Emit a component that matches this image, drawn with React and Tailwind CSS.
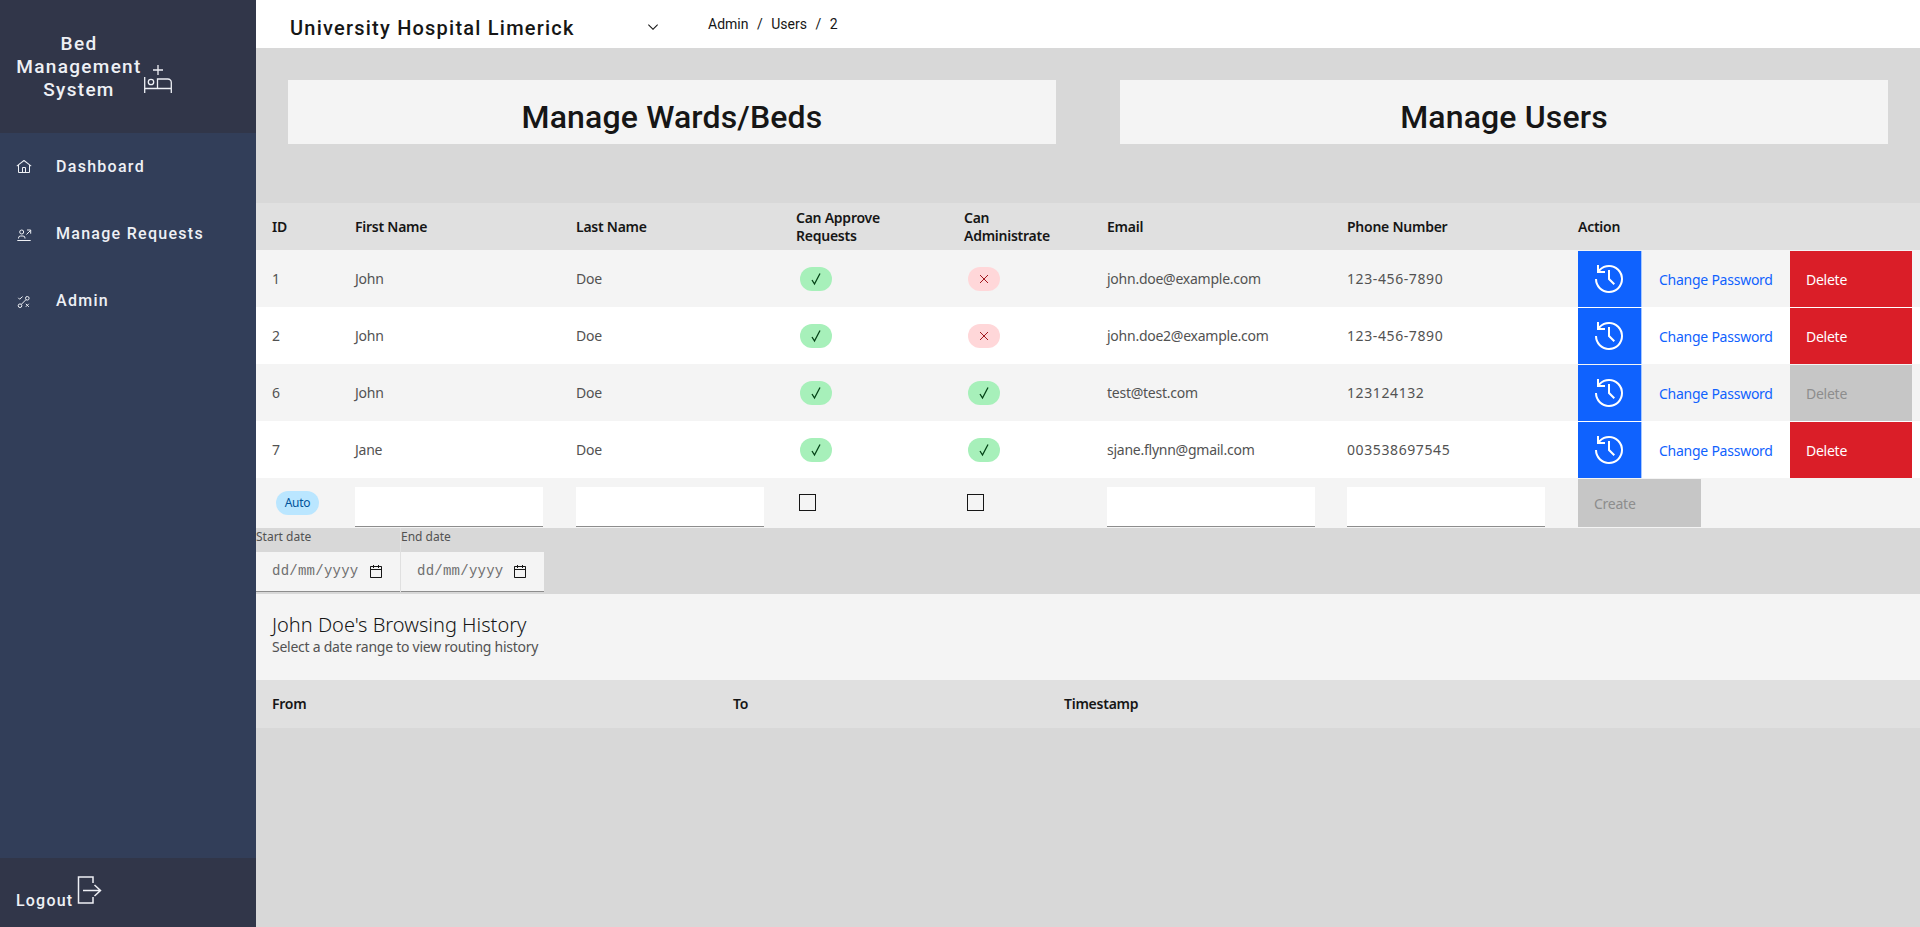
const users = [
  { id: 1, first: 'John', last: 'Doe', approve: true, admin: false, email: 'john.doe@example.com', phone: '123-456-7890' },
  { id: 2, first: 'John', last: 'Doe', approve: true, admin: false, email: 'john.doe2@example.com', phone: '123-456-7890' },
  { id: 6, first: 'John', last: 'Doe', approve: true, admin: true, email: 'test@test.com', phone: '123124132', noDelete: true },
  { id: 7, first: 'Jane', last: 'Doe', approve: true, admin: true, email: 'sjane.flynn@gmail.com', phone: '003538697545' },
]

function HomeIcon(){
  return (
    <svg width="16" height="16" viewBox="0 0 32 32" fill="currentColor">
      <path d="M16.612 2.214a1.01 1.01 0 0 0-1.242 0L1 13.419l1.243 1.572L4 13.621V26a2.004 2.004 0 0 0 2 2h20a2.004 2.004 0 0 0 2-2V13.63L29.757 15 31 13.428zM18 26h-4v-8h4zm2 0v-8a2.002 2.002 0 0 0-2-2h-4a2.002 2.002 0 0 0-2 2v8H6V12.062l10-7.79 10 7.8V26z"/>
    </svg>
  )
}

function RequestsIcon(){
  return (
    <svg width="16" height="16" viewBox="0 0 16 16" fill="none" stroke="currentColor" strokeWidth="1">
      <circle cx="5.700" cy="6" r="2"/>
      <path d="M2.500 12.500v-.5a2 2 0 0 1 2-2h2.500a2 2 0 0 1 2 2v.5"/>
      <path d="M10.500 8.500L14.500 4.500M11 4h3.700v3.700"/>
      <path d="M1.300 14.500h13.400"/>
    </svg>
  )
}

function AdminIcon(){
  return (
    <svg width="16" height="16" viewBox="0 0 16 16" fill="none" stroke="currentColor" strokeWidth="1">
      <path d="M2.300 4.800l1.300 1.400 3-2.600"/>
      <circle cx="11.300" cy="5.300" r="1.800"/>
      <circle cx="4" cy="12.700" r="1.800"/>
      <path d="M5.300 11.400L10 6.600"/>
      <path d="M9.800 10.800l3 3M12.800 10.800l-3 3"/>
    </svg>
  )
}

function BedIcon(){
  return (
    <svg width="30" height="30" viewBox="0 0 30 30" fill="none" stroke="currentColor" strokeWidth="1.300" className="shrink-0">
      <path d="M10 6h10M15 1v10"/>
      <path d="M1.700 13v16M1.700 24.500h26.600M28.300 29V18.500a3.500 3.500 0 0 0-3.500-3.500H14.500v9.500"/>
      <circle cx="8" cy="18" r="2.700"/>
    </svg>
  )
}

function LogoutIcon(){
  return (
    <svg width="25" height="28" viewBox="0 0 25 28" fill="none" stroke="currentColor" strokeWidth="1.500" className="shrink-0">
      <path d="M16 7V1H1.500v26H16v-6"/>
      <path d="M6 14.500h17.500M17.500 9l6 5.500-6 5.500"/>
    </svg>
  )
}

function HistoryIcon(){
  return (
    <svg width="32" height="32" viewBox="0 0 32 32" fill="currentColor">
      <path d="M20.590 22L15 16.410V7h2v8.580l5 5.010L20.590 22z"/>
      <path d="M16 2A13.940 13.940 0 0 0 6 6.230V2H4v8h8V8H7.080A12 12 0 1 1 4 16H2A14 14 0 1 0 16 2z"/>
    </svg>
  )
}

function CalendarIcon(){
  return (
    <svg width="16" height="16" viewBox="0 0 32 32" fill="#161616">
      <path d="M26 4h-4V2h-2v2h-8V2h-2v2H6c-1.100 0-2 .9-2 2v20c0 1.100.9 2 2 2h20c1.100 0 2-.9 2-2V6c0-1.100-.9-2-2-2zm0 22H6V12h20v14zm0-16H6V6h4v2h2V6h8v2h2V6h4v4z"/>
    </svg>
  )
}

function ChevronIcon(){
  return (
    <svg width="16" height="16" viewBox="0 0 32 32" fill="#161616" className="mt-[5px]">
      <path d="M16 22 6 12l1.400-1.400 8.600 8.600 8.600-8.600L26 12z"/>
    </svg>
  )
}

function Tag({ ok }){
  return ok ? (
    <span className="ml-1 flex h-6 w-8 items-center justify-center rounded-full bg-[#a7f0ba] text-[#044317]">
      <svg width="12" height="14" viewBox="0 0 12 14" fill="none" stroke="currentColor" strokeWidth="1.300"><path d="M2 8l2.500 4L10 1.500"/></svg>
    </span>
  ) : (
    <span className="ml-1 flex h-6 w-8 items-center justify-center rounded-full bg-[#ffd7d9] text-[#a2191f]">
      <svg width="12" height="12" viewBox="0 0 12 12" fill="none" stroke="currentColor" strokeWidth="1"><path d="M2 2l8 8M10 2l-8 8"/></svg>
    </span>
  )
}

function NavItem({ icon, label }){
  return (
    <div className="flex h-[67px] items-center px-4 text-[16px] font-medium tracking-[1.28px] text-[#eef0f5]">
      <span className="flex w-10 shrink-0">{icon}</span>
      {label}
    </div>
  )
}

function TextInput(){
  return <input className="block h-10 w-full border-b border-[#8d8d8d] bg-white outline-none"/>
}

function DateField({ label, width }){
  return (
    <div className={width}>
      <div className="h-6 text-[12px] leading-[18px] text-[#525252]">{label}</div>
      <div className="flex h-10 items-center justify-between border-b border-[#8d8d8d] bg-[#f4f4f4] pl-4 pr-4">
        <span className="font-['Liberation_Mono',monospace] text-[14px] tracking-[0.25px] text-[#6f6f6f]">dd/mm/yyyy</span>
        <CalendarIcon/>
      </div>
    </div>
  )
}

export default function App(){
  return (
    <div className="flex h-[927px] overflow-hidden bg-[#d8d8d8] font-['Noto_Sans',sans-serif] text-[#161616]">
      <aside className="flex w-[256px] shrink-0 flex-col bg-[#323e59] font-['Roboto',sans-serif]">
        <div className="flex h-[133px] items-start gap-[1px] bg-[#313649] pl-4 text-[#eef0f5]">
          <div className="mt-[32px] w-[126px] text-center text-[19px] font-medium leading-[23px] tracking-[1.3px]">Bed Management System</div>
          <div className="mt-[64px]"><BedIcon/></div>
        </div>
        <div className="flex-1">
          <NavItem icon={<HomeIcon/>} label="Dashboard"/>
          <NavItem icon={<RequestsIcon/>} label="Manage Requests"/>
          <NavItem icon={<AdminIcon/>} label="Admin"/>
        </div>
        <div className="flex h-[69px] items-start gap-1 bg-[#313649] pl-4 pt-[18px] text-[#eef0f5]">
          <span className="mt-[15px] text-[16px] font-medium leading-[20px] tracking-[1.2px]">Logout</span>
          <LogoutIcon/>
        </div>
      </aside>

      <main className="min-w-0 flex-1">
        <header className="flex h-12 items-center bg-white font-['Roboto',sans-serif]">
          <div className="ml-[34px] w-[355px] pt-[8px] text-[20px] font-medium tracking-[1.22px]">University Hospital Limerick</div>
          <ChevronIcon/>
          <div className="ml-[47px] flex gap-[8.5px] text-[14px]">
            <span>Admin</span><span>/</span><span>Users</span><span>/</span><span>2</span>
          </div>
        </header>

        <div className="flex h-[155px] items-start gap-16 px-8 pt-8 font-['Roboto',sans-serif]">
          <div className="flex h-16 w-[768px] items-center justify-center bg-[#f4f4f4] pt-[10px] text-[32px] font-medium tracking-[0.15px]">Manage Wards/Beds</div>
          <div className="flex h-16 w-[768px] items-center justify-center bg-[#f4f4f4] pt-[10px] text-[32px] font-medium tracking-[0.15px]">Manage Users</div>
        </div>

        <table className="w-full table-fixed border-collapse text-left text-[14px] tracking-[-0.25px]">
          <colgroup>
            <col className="w-[83px]"/><col className="w-[221px]"/><col className="w-[220px]"/><col className="w-[168px]"/><col className="w-[143px]"/><col className="w-[240px]"/><col className="w-[247px]"/><col className="w-[342px]"/>
          </colgroup>
          <thead>
            <tr className="h-[47px] bg-[#e0e0e0] text-[14px] leading-[18px]">
              <th className="pl-4 font-semibold">ID</th>
              <th className="pl-4 font-semibold">First Name</th>
              <th className="pl-4 font-semibold">Last Name</th>
              <th className="pl-4 font-semibold">Can Approve<br/>Requests</th>
              <th className="pl-4 font-semibold">Can<br/>Administrate</th>
              <th className="pl-4 font-semibold">Email</th>
              <th className="pl-4 font-semibold">Phone Number</th>
              <th className="font-semibold">Action</th>
            </tr>
          </thead>
          <tbody className="text-[#525252]">
            {users.map(u=>(
              <tr key={u.id} className="h-[57px] odd:bg-[#f4f4f4] even:bg-white">
                <td className="pl-4">{u.id}</td>
                <td className="pl-4">{u.first}</td>
                <td className="pl-4">{u.last}</td>
                <td className="pl-4"><Tag ok={u.approve}/></td>
                <td className="pl-4"><Tag ok={u.admin}/></td>
                <td className="pl-4">{u.email}</td>
                <td className="pl-4 tracking-[0.6px]">{u.phone}</td>
                <td className="p-0 align-top">
                  <div className="flex h-[57px] pt-px">
                    <button className="flex h-14 w-[64px] items-center justify-center border-r border-[#a6c8ff] bg-[#0f62fe] pr-px text-white"><HistoryIcon/></button>
                    <button className="h-14 w-[148px] pl-[17px] text-left text-[#0f62fe]">Change Password</button>
                    <button className={u.noDelete ? 'h-14 w-[122px] bg-[#c6c6c6] pl-4 text-left text-[#8d8d8d]' : 'h-14 w-[122px] bg-[#da1e28] pl-4 text-left text-white'}>Delete</button>
                  </div>
                </td>
              </tr>
            ))}
            <tr className="h-[50px] bg-[#f4f4f4]">
              <td className="pl-5"><span className="flex h-6 w-[43px] items-center justify-center rounded-full bg-[#bae6ff] text-[12px] text-[#00539a]">Auto</span></td>
              <td className="pl-4 pr-[17px] pt-[9px] align-top"><TextInput/></td>
              <td className="pl-4 pr-[16px] pt-[9px] align-top"><TextInput/></td>
              <td className="pl-[19px] pt-[16px] align-top"><div className="h-[17px] w-[17px] border border-[#161616]"/></td>
              <td className="pl-[19px] pt-[16px] align-top"><div className="h-[17px] w-[17px] border border-[#161616]"/></td>
              <td className="pl-4 pr-4 pt-[9px] align-top"><TextInput/></td>
              <td className="pl-4 pr-[33px] pt-[9px] align-top"><TextInput/></td>
              <td className="p-0 align-top"><button className="mt-px h-12 w-[123px] bg-[#c6c6c6] pl-4 text-left text-[#8d8d8d]">Create</button></td>
            </tr>
          </tbody>
        </table>

        <div className="flex">
          <DateField label="Start date" width="w-[145px] border-r border-[#e0e0e0]"/>
          <DateField label="End date" width="w-[143px]"/>
        </div>

        <div className="mt-[2px] flex h-[86px] flex-col bg-[#f4f4f4] px-4 pt-[18px]">
          <div className="text-[20px] font-light leading-[26px] text-[#161616]">John Doe's Browsing History</div>
          <div className="text-[14px] leading-[18px] tracking-[-0.25px] text-[#525252]">Select a date range to view routing history</div>
        </div>
        <div className="flex h-12 items-center bg-[#e0e0e0] pb-[2px] text-[14px] font-semibold tracking-[-0.25px]">
          <div className="w-[461px] pl-4">From</div>
          <div className="w-[331px] pl-4">To</div>
          <div className="pl-4">Timestamp</div>
        </div>
      </main>
    </div>
  )
}
